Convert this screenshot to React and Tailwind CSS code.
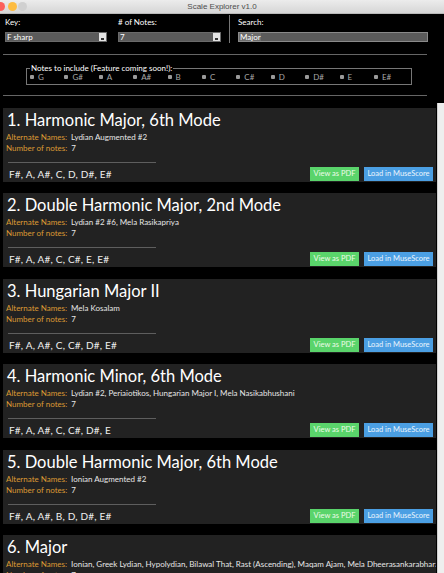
import React from "react";

const scales = [
  { n: "1. Harmonic Major, 6th Mode", alt: "Lydian Augmented #2", notes: "F#, A, A#, C, D, D#, E#" },
  { n: "2. Double Harmonic Major, 2nd Mode", alt: "Lydian #2 #6, Mela Rasikapriya", notes: "F#, A, A#, C, C#, E, E#" },
  { n: "3. Hungarian Major II", alt: "Mela Kosalam", notes: "F#, A, A#, C, C#, D#, E#" },
  { n: "4. Harmonic Minor, 6th Mode", alt: "Lydian #2, Periaiotikos, Hungarian Major I, Mela Nasikabhushani", notes: "F#, A, A#, C, C#, D#, E" },
  { n: "5. Double Harmonic Major, 6th Mode", alt: "Ionian Augmented #2", notes: "F#, A, A#, B, D, D#, E#" },
  { n: "6. Major", alt: "Ionian, Greek Lydian, Hypolydian, Bilawal That, Rast (Ascending), Maqam Ajam, Mela Dheerasankarabharanam", notes: "F#, G#, A#, B, C#, D#, E#" },
];

const checks = ["G", "G#", "A", "A#", "B", "C", "C#", "D", "D#", "E", "E#"];

function Select({ value, w }) {
  return (
    <div className={`flex h-[10px] ${w} bg-[#5b5b5b] border border-[#6a6a6a]`}>
      <div className="flex-1 text-[8px] leading-[8px] text-white pl-[1px] whitespace-nowrap">{value}</div>
      <div className="w-[7px] h-full bg-[#e4e4e4] flex items-end justify-center pb-[1px]">
        <div className="w-[3px] h-[2px] bg-[#333]" />
      </div>
    </div>
  );
}

function Card({ s }) {
  return (
    <div className="bg-[#222222] h-[74px] shrink-0 flex flex-col pl-[3px] pr-[3px] overflow-hidden">
      <div className="text-[16.5px] leading-[24px] text-white whitespace-nowrap pl-[1px]">{s.n}</div>
      <div className="text-[8px] leading-[11px] whitespace-nowrap">
        <span className="text-[#dc9a34]">Alternate Names:</span>
        <span className="text-[#e6e6e6] ml-[4px]">{s.alt}</span>
      </div>
      <div className="text-[8px] leading-[11px] whitespace-nowrap">
        <span className="text-[#dc9a34]">Number of notes:</span>
        <span className="text-[#e6e6e6] ml-[4px]">7</span>
      </div>
      <div className="mt-[8px] ml-[2px] w-[148px] h-px bg-[#5e5e5e]" />
      <div className="flex items-center pt-[4px]">
        <div className="flex-1 text-[10px] leading-[14px] tracking-[0.2px] text-[#f0f0f0] pl-[3px] whitespace-nowrap">{s.notes}</div>
        <div className="h-[14px] w-[49px] bg-[#5ad46b] text-[7.5px] leading-[14px] text-[#eefbe9] text-center">View as PDF</div>
        <div className="h-[14px] w-[69px] ml-[5px] bg-[#4b9fe3] text-[7.5px] leading-[14px] text-[#eaf4fd] text-center">Load in MuseScore</div>
      </div>
    </div>
  );
}

export default function App() {
  return (
    <div className="w-[444px] h-[573px] overflow-hidden bg-black flex flex-col" style={{ fontFamily: "Lato, 'Noto Sans', sans-serif" }}>
      {/* title bar */}
      <div className="h-[14px] shrink-0 relative bg-gradient-to-b from-[#ececec] to-[#d6d6d6] border-b border-[#b9b9b9] flex items-center justify-center">
        <div className="absolute left-[-4px] top-[2px] w-[9px] h-[9px] rounded-full bg-[#fc605b]" />
        <div className="absolute left-[8px] top-[2px] w-[9px] h-[9px] rounded-full bg-[#fdbc40]" />
        <div className="absolute left-[18px] top-[2px] w-[9px] h-[9px] rounded-full bg-[#d0d0d0]" />
        <div className="text-[8px] text-[#4d4d4d]" style={{ fontFamily: "'Liberation Sans', sans-serif" }}>Scale Explorer v1.0</div>
      </div>

      {/* controls */}
      <div className="flex shrink-0 pl-[5px]">
        <div className="flex flex-col pt-[3px]">
          <div className="text-[8px] leading-[10px] text-white h-[10px]">Key:</div>
          <div className="mt-[5px]"><Select value="F sharp" w="w-[102px]" /></div>
        </div>
        <div className="flex flex-col pt-[3px] ml-[11px]">
          <div className="text-[8px] leading-[10px] text-white h-[10px]"># of Notes:</div>
          <div className="mt-[5px]"><Select value="7" w="w-[103px]" /></div>
        </div>
        <div className="mt-[1px] ml-[8px] w-px h-[28px] bg-[#777]" />
        <div className="flex flex-col pt-[3px] ml-[8px]">
          <div className="text-[8px] leading-[10px] text-white h-[10px]">Search:</div>
          <div className="mt-[5px] w-[190px] h-[10px] bg-[#5b5b5b] border border-[#8a8a8a] flex items-center">
            <span className="text-[8px] leading-[8px] text-white pl-[1px] bg-[#6c6c6c]">Major</span>
          </div>
        </div>
      </div>

      <div className="ml-[3px] mt-[11px] w-[424px] h-px bg-[#666] shrink-0" />

      <fieldset className="ml-[26px] mt-[9px] w-[381px] h-[21px] border border-[#777] shrink-0 px-[3px]">
        <legend className="text-[8px] leading-[8px] text-white px-[1px]">Notes to include (Feature coming soon!):</legend>
        <div className="flex items-center h-[11px] -mt-[1px]">
          {checks.map((c) => (
            <div key={c} className="w-[34.4px] flex items-center shrink-0">
              <div className="w-[4px] h-[4px] bg-[#9a9a9a] rounded-[1px]" />
              <span className="text-[8px] leading-[8px] text-[#a9a9a9] ml-[4px]">{c}</span>
            </div>
          ))}
        </div>
      </fieldset>

      <div className="ml-[3px] mt-[10px] w-[424px] h-px bg-[#666] shrink-0" />

      {/* list */}
      <div className="flex flex-1 mt-[7px] min-h-0">
        <div className="flex-1 flex flex-col gap-[11.4px] pt-[5px] pl-[3px] pr-px overflow-hidden">
          {scales.map((s) => (
            <Card key={s.n} s={s} />
          ))}
        </div>
        <div className="w-[7px] bg-[#eeeeee] border-l border-[#cfcfcf]" />
      </div>
    </div>
  );
}
